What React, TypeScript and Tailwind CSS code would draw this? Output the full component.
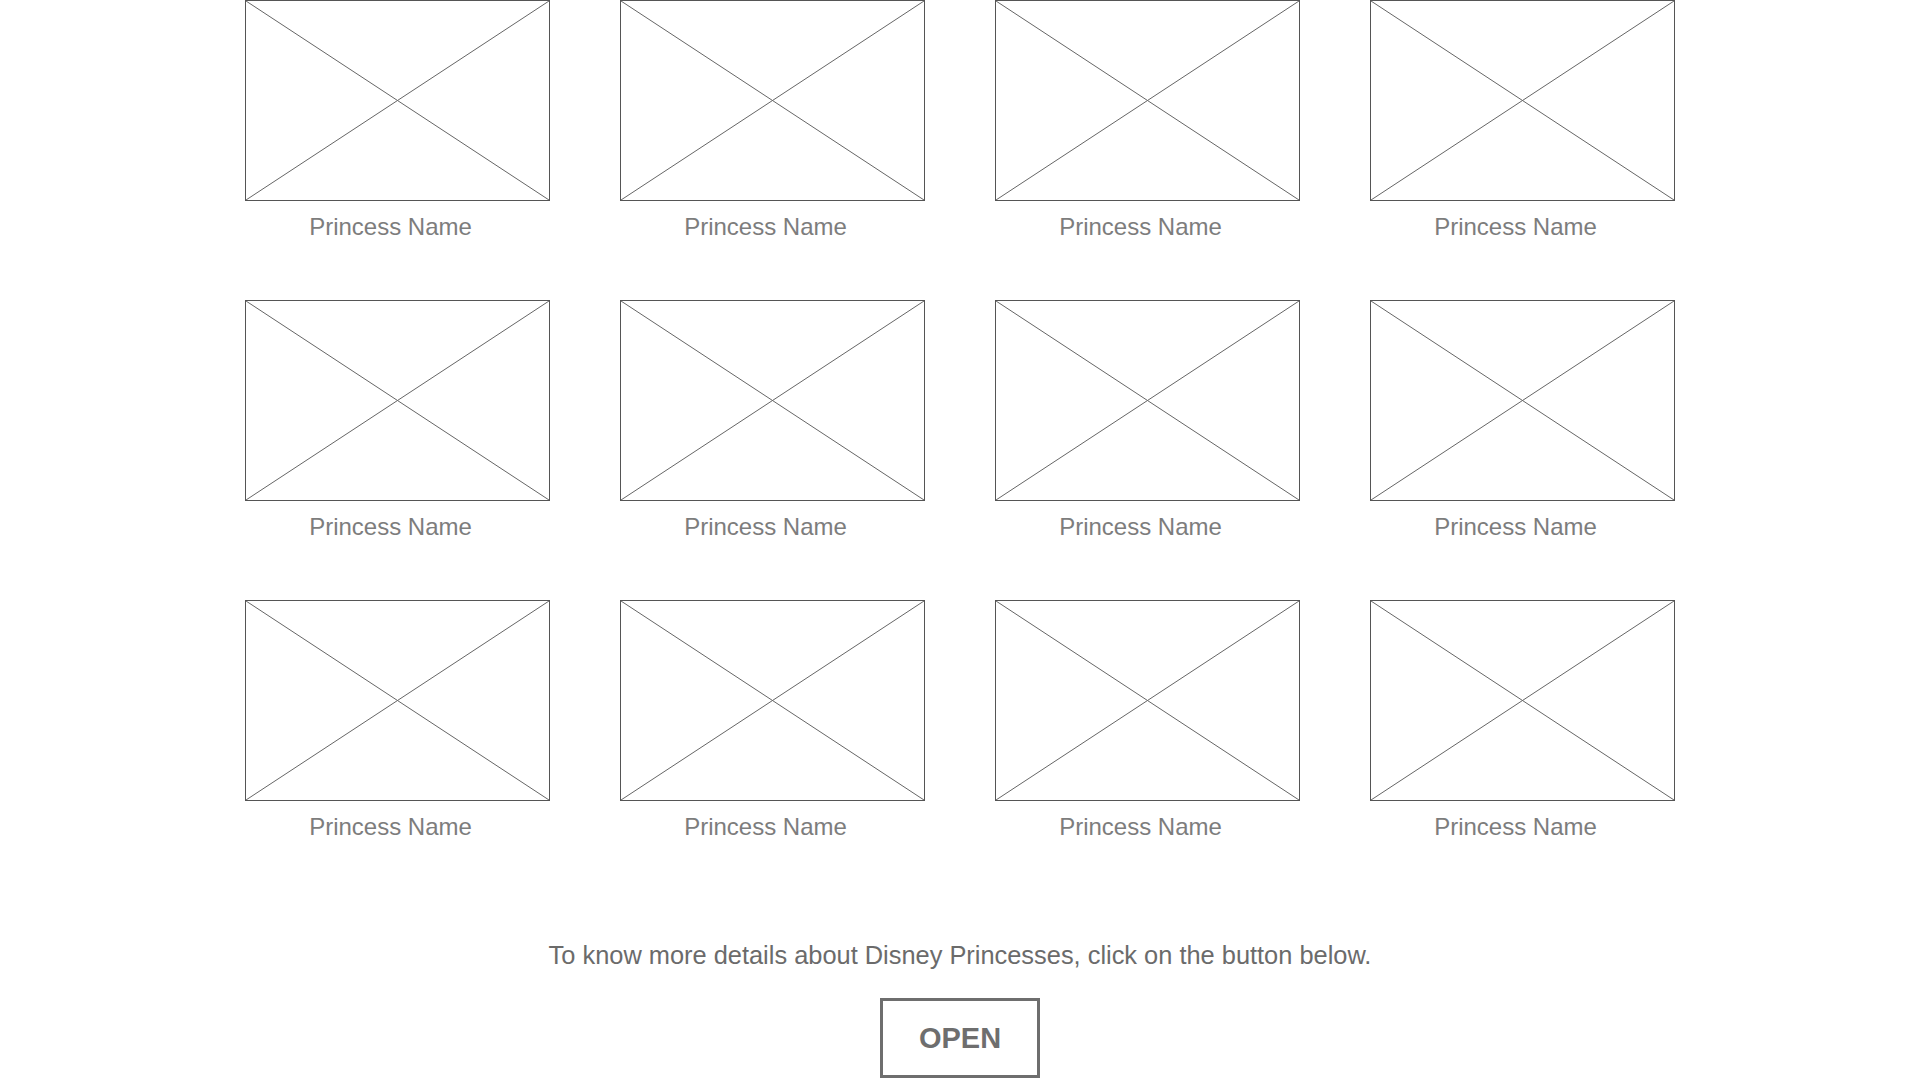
import React from "react";

function Card() {
  return (
    <div className="flex flex-col">
      <div className="relative h-[201px] w-[305px] border border-[#555555] bg-white">
        <svg className="absolute inset-0 h-full w-full" viewBox="0 0 100 100" preserveAspectRatio="none">
          <line x1="0" y1="0" x2="100" y2="100" stroke="#666666" strokeWidth="1" vectorEffect="non-scaling-stroke" />
          <line x1="100" y1="0" x2="0" y2="100" stroke="#666666" strokeWidth="1" vectorEffect="non-scaling-stroke" />
        </svg>
      </div>
      <div className="mt-[12px] pr-[14px] text-center text-[24px] leading-[28px] text-[#7d7d7d]">Princess Name</div>
    </div>
  );
}

export default function App() {
  const items = Array.from({ length: 12 }, (_, i) => i);
  return (
    <div className="flex h-[1080px] w-full flex-col items-center overflow-hidden bg-white font-['Liberation_Sans',Arial,sans-serif]">
      <div className="grid grid-cols-[repeat(4,305px)] gap-x-[70px] gap-y-[59px]">
        {items.map((i) => (
          <Card key={i} />
        ))}
      </div>
      <p className="mt-[100px] text-[25.4px] leading-[28px] text-[#6b6b6b]">
        To know more details about Disney Princesses, click on the button below.
      </p>
      <button className="mt-[29px] flex h-[80px] w-[160px] items-center justify-center border-[3px] border-[#6e6e6e] bg-white text-[29px] font-bold leading-[33px] text-[#6e6e6e]">
        OPEN
      </button>
    </div>
  );
}
